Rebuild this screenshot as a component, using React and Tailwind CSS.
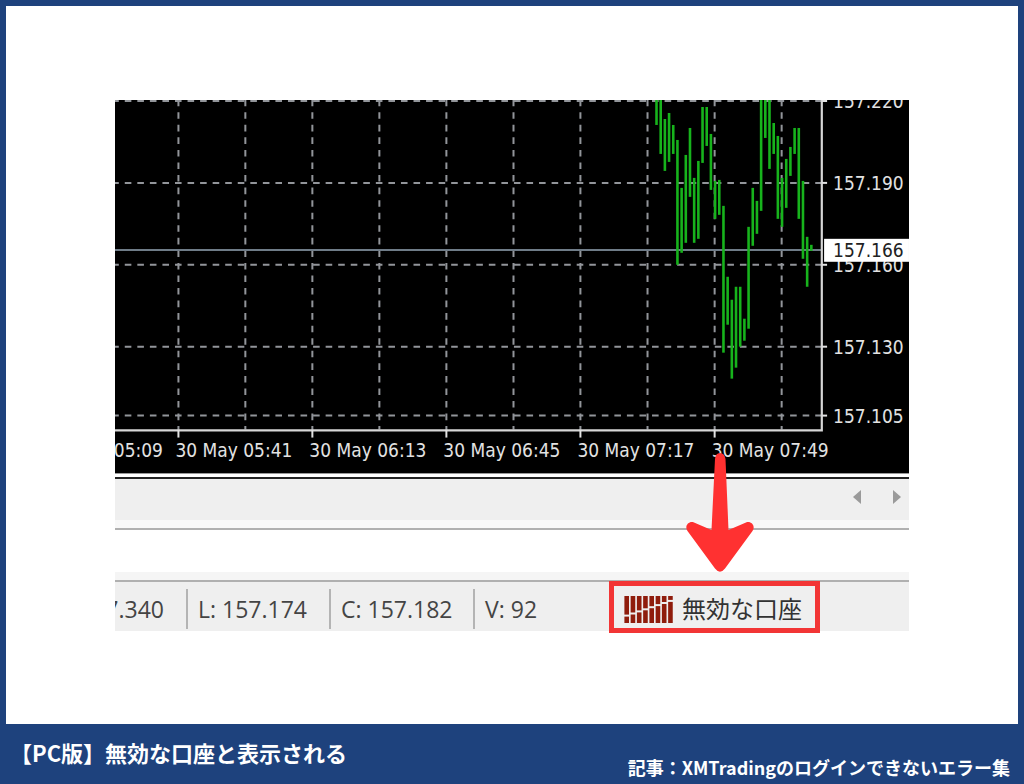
import React from 'react';

// [top, bottom] of every price bar, oldest first
const BARS = [
  [0, 25], [0, 54], [19, 71], [13, 62], [25, 54], [40, 165], [88, 153], [55, 143], [28, 97], [78, 143],
  [61, 139], [7, 63], [7, 46], [34, 90], [81, 119], [80, 115], [106, 253], [177, 225], [200, 279], [187, 268],
  [187, 247], [219, 241], [127, 229], [88, 146], [101, 134], [0, 111], [0, 38], [0, 69], [23, 54], [36, 119],
  [78, 127], [59, 108], [47, 76], [28, 54], [28, 119], [81, 159], [137, 187], [145, 151],
];

const GRID_X = [63.5, 130.5, 197.6, 264.7, 331.8, 399, 466, 533.2, 600.4, 667.5];

const PRICES = [
  { label: '157.220', y: 1 },
  { label: '157.190', y: 83 },
  { label: '157.160', y: 165 },
  { label: '157.130', y: 247 },
  { label: '157.105', y: 316 },
];

const TIMES = [
  { label: '30 May 05:41', x: 63.5 },
  { label: '30 May 06:13', x: 197.6 },
  { label: '30 May 06:45', x: 331.8 },
  { label: '30 May 07:17', x: 466 },
  { label: '30 May 07:49', x: 600.4 },
];

const Chart = () => (
  <svg viewBox="0 0 795 374" className="block w-full bg-black font-['DejaVu_Sans_Condensed','DejaVu_Sans',sans-serif] text-[19px]">
    <g stroke="#92959a" strokeWidth="2" strokeDasharray="6.6 5.97">
      {GRID_X.map((x) => <line key={x} x1={x} x2={x} y1="-0.3" y2="330" />)}
      {PRICES.map(({ y }) => <line key={y} x1="-2.8" x2="707" y1={y} y2={y} />)}
    </g>
    <line x1="0" x2="707" y1="150.3" y2="150.3" stroke="#6f7c88" strokeWidth="2" />

    <g stroke="#17b31c" strokeWidth="2.6">
      {BARS.map(([top, bottom], i) => (
        <line key={i} x1={542.2 + i * 4.19} x2={542.2 + i * 4.19} y1={top} y2={bottom} />
      ))}
    </g>

    <path d="M0 330.8H707.7V0" fill="none" stroke="#d6d6d6" strokeWidth="2.2" />
    <g stroke="#e2e2e2" strokeWidth="2">
      {PRICES.map(({ y }) => <line key={y} x1="708" x2="713" y1={y} y2={y} />)}
      {TIMES.map(({ x }) => <line key={x} x1={x} x2={x} y1="330" y2="338" />)}
    </g>

    <g fill="#e2e2e2">
      {PRICES.map(({ label, y }) => <text key={label} x="719" y={y + 7}>{label}</text>)}
      <text x="48" y="357" textAnchor="end">05:09</text>
      {TIMES.map(({ label, x }) => <text key={label} x={x - 3} y="357">{label}</text>)}
    </g>

    <rect x="710" y="139" width="85" height="23" fill="#fff" />
    <text x="719" y="157" fill="#222">157.166</text>
  </svg>
);

const ScrollButton = ({ label, d }) => (
  <button type="button" aria-label={label} className="flex h-6 w-6 items-center justify-center">
    <svg viewBox="0 0 8 14" className="h-[14px] w-2" fill="#9a9a9a"><path d={d} /></svg>
  </button>
);

const ConnectionIcon = () => (
  <svg viewBox="0 0 50 27" className="h-[27px] w-[50px] shrink-0" fill="#8f1c0c">
    {[0, 1, 2, 3, 4, 5, 6, 7].map((i) => {
      const gap = 18.6 - i * 2.1;
      return (
        <g key={i}>
          <rect x={i * 6.25 + 0.4} y="0" width="4.6" height={gap} />
          <rect x={i * 6.25 + 0.4} y={gap + 2} width="4.6" height={25 - gap} />
        </g>
      );
    })}
  </svg>
);

const DownArrow = () => (
  <svg viewBox="0 0 68 120" className="absolute bottom-full left-[72px] mb-[13px] h-[120px] w-[68px]" fill="#ff3131">
    <path d="M29 6Q29.500 0 34 0Q38.500 0 39.500 6L42.500 77L60 69.500C65 67.500 70 73 66.500 78L39 115.500Q34 122 29 115.500L1.500 78C-2 73 3 67.500 8 69.500L25.500 77Z" />
  </svg>
);

const StatusBar = () => (
  <div className="flex h-[49px] items-center bg-[#efefef] pt-1 font-['Open_Sans','Noto_Sans_CJK_JP',sans-serif] text-[23px] leading-10 text-[#444]">
    <div className="flex w-[73px] justify-end overflow-hidden border-r-2 border-[#b4b4b4] pr-[22px]">7.340</div>
    <div className="w-[143px] border-r-2 border-[#b4b4b4] pl-[10px]">L: 157.174</div>
    <div className="w-[144px] border-r-2 border-[#b4b4b4] pl-[10px]">C: 157.182</div>
    <div className="pl-[10px]">V: 92</div>
    <div className="relative -mt-[5px] mr-[89px] ml-auto flex h-[52px] w-[211px] items-center gap-2 self-start border-[5px] border-[#f23535] pt-1 pl-[10px]">
      <ConnectionIcon />
      <span className="text-2xl whitespace-nowrap text-[#333]">無効な口座</span>
      <DownArrow />
    </div>
  </div>
);

const App = () => (
  <div className="flex min-h-screen flex-col bg-[#1e427d] font-['Noto_Sans_CJK_JP',sans-serif]">
    <main className="mx-[6px] mt-[6px] flex flex-1 items-center justify-center bg-white px-[109px] pt-px">
      <div className="w-full">
        <Chart />
        <div className="h-[6px] border-t border-b-2 border-t-[#999] border-b-[#222] bg-white" />
        <div className="flex h-[41px] items-center justify-end gap-4 bg-[#efefef] pb-[6px]">
          <ScrollButton label="Scroll left" d="M8 0V14L0 7Z" />
          <ScrollButton label="Scroll right" d="M0 0V14L8 7Z" />
        </div>
        <div className="h-[10px] border-b-2 border-[#b0b0b0] bg-[#f8f8f8]" />
        <div className="h-[42px] bg-white" />
        <div className="h-[10px] border-b-2 border-[#b0b0b0] bg-[#f5f5f5]" />
        <StatusBar />
      </div>
    </main>
    <footer className="flex h-[60px] justify-between pr-[14px] pl-[10px] font-bold text-white">
      <h1 className="pt-3 text-[22px] leading-8">【PC版】無効な口座と表示される</h1>
      <p className="pt-[27px] text-lg leading-8">記事：XMTradingのログインできないエラー集</p>
    </footer>
  </div>
);

export default App;
